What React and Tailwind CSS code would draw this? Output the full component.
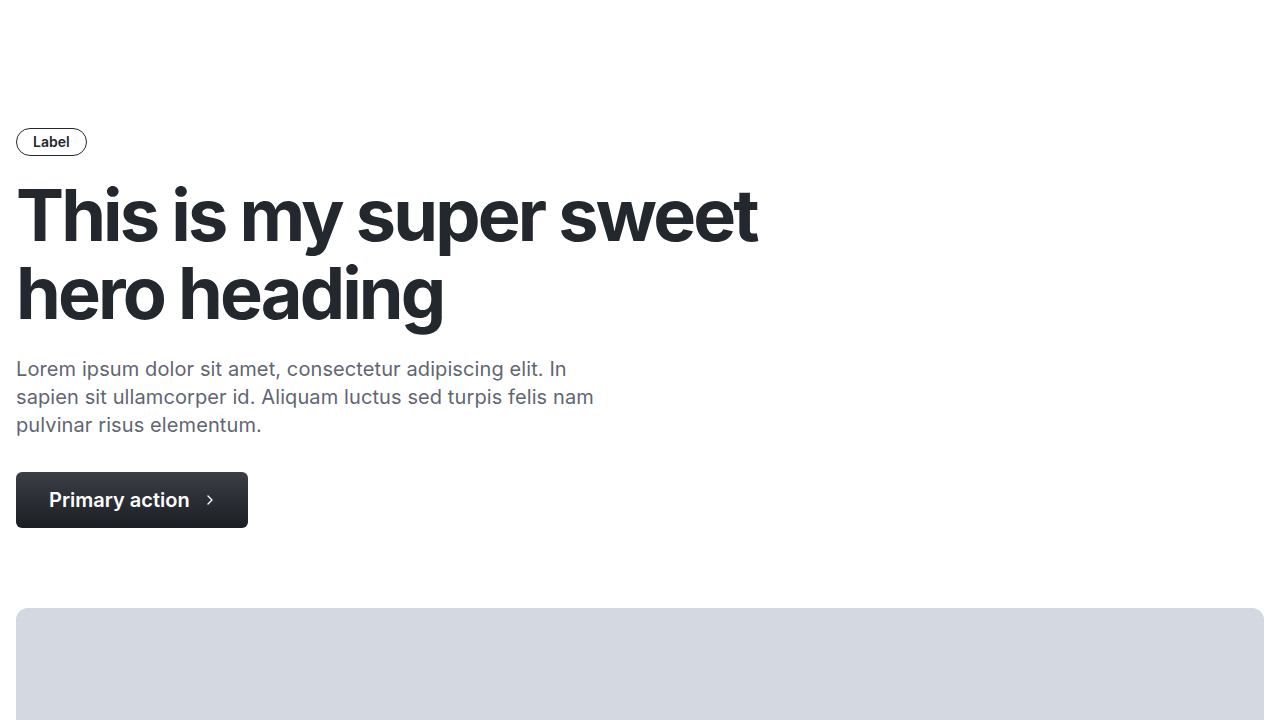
import { ChevronRight } from 'lucide-react'

export default function App() {
  return (
    <div className="min-h-screen bg-white px-4 pt-32 font-['Inter',sans-serif] text-[#23272e]">
      <span className="inline-flex h-7 items-center rounded-full border border-[#23272e] px-4 text-sm font-semibold">
        Label
      </span>
      <h1 className="mt-5 max-w-[800px] text-[72px] font-bold leading-[78px] tracking-[-0.04em]">
        This is my super sweet hero heading
      </h1>
      <p className="mt-[23px] max-w-[600px] text-xl leading-7 tracking-[0.005em] text-[#5f6672]">
        Lorem ipsum dolor sit amet, consectetur adipiscing elit. In sapien sit ullamcorper id. Aliquam luctus sed turpis felis nam pulvinar risus elementum.
      </p>
      <button className="mt-[33px] inline-flex h-14 items-center gap-3 rounded-md bg-gradient-to-b from-[#3c3f46] to-[#1b1e23] pl-[33px] pr-[30px] text-xl font-semibold text-white">
        Primary action
        <ChevronRight size={16} strokeWidth={2} />
      </button>
      <div className="mt-20 h-[400px] rounded-xl bg-[#d4d8e1]" />
    </div>
  )
}
